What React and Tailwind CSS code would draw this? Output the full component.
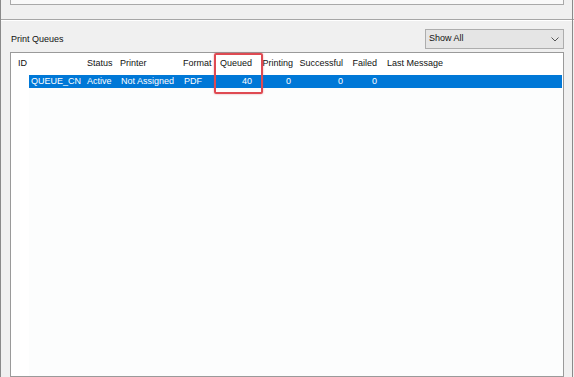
import React from "react";

const font = { fontFamily: '"Liberation Sans", Arial, sans-serif' };

function Cell({ w, align = "left", pad, children }) {
  return (
    <div
      className={`shrink-0 whitespace-nowrap overflow-hidden ${align === "right" ? "text-right" : "text-left"} ${pad}`}
      style={{ width: w }}
    >
      {children}
    </div>
  );
}

export default function App() {
  return (
    <div
      className="w-[574px] h-[377px] bg-[#f0f0f0] overflow-hidden flex flex-col border-l border-l-[#8a8a8a] text-[9px] text-[#111]"
      style={font}
    >
      {/* top box remnant */}
      <div className="ml-[9px] w-[554px] h-[5px] bg-[#f9f9f9] border-x border-b border-[#a9a9a9]" />
      {/* separator */}
      <div className="mt-[14px] h-[2px] border-t border-t-[#a6a6a6] border-b border-b-white" />
      <div className="relative flex-1 flex flex-col pr-[10px]">
        {/* right window border */}
        <div className="absolute right-[1px] top-[-21px] bottom-0 w-px bg-[#8a8a8a]" />
        <div className="mt-[8px] flex items-center justify-between pl-[10px]">
          <span className="leading-[20px]">Print Queues</span>
          <div className="w-[139px] h-[20px] bg-[#e5e5e5] border border-[#adadad] flex items-center justify-between pl-[3px] pr-[4px]">
            <span>Show All</span>
            <svg width="8" height="5" viewBox="0 0 8 5">
              <path d="M0.5 0.5 L4 4 L7.5 0.5" fill="none" stroke="#555" strokeWidth="1" />
            </svg>
          </div>
        </div>
        <div className="relative mt-[3px] ml-[9px] flex-1 bg-white border border-[#9a9a9a] flex flex-col">
          {/* header */}
          <div className="mt-[3px] h-[14px] leading-[14px] flex">
            <Cell w={72} pad="pl-[7px]">ID</Cell>
            <Cell w={33} pad="pl-[4px]">Status</Cell>
            <Cell w={63} pad="pl-[4px]">Printer</Cell>
            <Cell w={37} pad="pl-[4px]">Format</Cell>
            <Cell w={41} align="right" pad="pr-[5px]">Queued</Cell>
            <Cell w={40} align="right" pad="pr-[4px]">Printing</Cell>
            <Cell w={51} align="right" pad="pr-[5px]">Successful</Cell>
            <Cell w={34} align="right" pad="pr-[5px]">Failed</Cell>
            <Cell w={100} pad="pl-[5px]">Last Message</Cell>
          </div>
          {/* selected row */}
          <div className="mt-[5px] h-[13px] leading-[13px] flex">
            <div className="w-[18px] shrink-0" />
            <div className="flex-1 mr-px bg-[#0078d7] text-white flex">
              <Cell w={54} pad="pl-[2px]">QUEUE_CN</Cell>
              <Cell w={33} pad="pl-[4px]">Active</Cell>
              <Cell w={63} pad="pl-[5px]">Not Assigned</Cell>
              <Cell w={37} pad="pl-[5px]">PDF</Cell>
              <Cell w={41} align="right" pad="pr-[5px]">40</Cell>
              <Cell w={40} align="right" pad="pr-[6px]">0</Cell>
              <Cell w={51} align="right" pad="pr-[5px]">0</Cell>
              <Cell w={34} align="right" pad="pr-[5px]">0</Cell>
            </div>
          </div>
          <div className="flex-1 ml-[18px] bg-[#fcfdfd]" />
          {/* highlight box */}
          <div className="absolute left-[203px] top-[0px] w-[49px] h-[41px] border-2 border-[#df4a52] rounded-[2px] shadow-[0_0_2px_rgba(200,60,70,0.5)]" />
        </div>
      </div>
    </div>
  );
}
